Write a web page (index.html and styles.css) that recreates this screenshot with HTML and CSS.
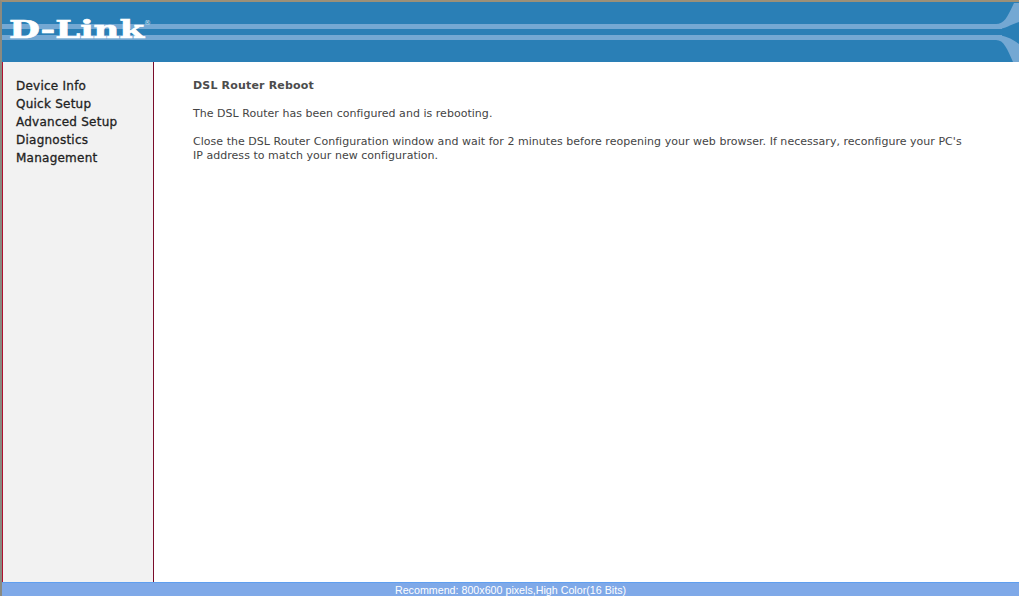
FILE: index.html
```html
<!DOCTYPE html>
<html lang="en">
<head>
<meta charset="utf-8">
<title>DSL Router Reboot</title>
<link rel="stylesheet" href="styles.css">
</head>
<body>
<div class="page">
  <header class="banner">
    <svg class="banner-art" width="1017" height="60" viewBox="0 0 1017 60" aria-hidden="true">
      <rect x="0" y="22" width="1000" height="5" fill="#74a8d3"/>
      <rect x="0" y="33" width="1000" height="5" fill="#74a8d3"/>
      <path d="M994 22 C1002 22 1005 16 1012 1 L1017 1 L1017 20 C1010 22 1003 27 996 27 Z" fill="#74a8d3"/>
      <path d="M994 33 C1003 33 1010 37 1017 42 L1017 60 L1011 60 C1005 47 1002 38 994 38 Z" fill="#74a8d3"/>
    </svg>
    <div class="logo"><span class="logo-text">D-Link</span><span class="logo-mark">®</span></div>
  </header>
  <div class="body-row">
    <nav class="menu">
      <a href="#">Device Info</a>
      <a href="#">Quick Setup</a>
      <a href="#">Advanced Setup</a>
      <a href="#">Diagnostics</a>
      <a href="#">Management</a>
    </nav>
    <main class="content">
      <h1>DSL Router Reboot</h1>
      <p>The DSL Router has been configured and is rebooting.</p>
      <p>Close the DSL Router Configuration window and wait for 2 minutes before reopening your web browser. If necessary, reconfigure your PC's IP address to match your new configuration.</p>
    </main>
  </div>
  <footer class="status">Recommend: 800x600 pixels,High Color(16 Bits)</footer>
</div>
</body>
</html>
```
FILE: styles.css
```css
html, body { margin: 0; height: 100%; overflow: hidden; background: #fff; }
.page {
  box-sizing: border-box;
  height: 596px;
  display: flex;
  flex-direction: column;
  border-top: 2px solid #9c9078;
  border-left: 2px solid #8a8a80;
  font-family: "DejaVu Sans", Verdana, sans-serif;
}
.banner { position: relative; height: 60px; flex: none; background: #2a7fb6; overflow: hidden; }
.banner-art { position: absolute; left: 0; top: 0; display: block; }
.logo { position: absolute; left: 7px; top: 15px; color: #fff; }
.logo-text {
  display: block;
  font: bold 25px/26px "DejaVu Serif", serif;
  transform: scaleX(1.42);
  transform-origin: left top;
  -webkit-text-stroke: 0.7px #fff;
}
.logo-mark {
  position: absolute;
  left: 135px;
  top: 2px;
  font: 7px/8px "DejaVu Sans", sans-serif;
  color: #cfe2f0;
}
.body-row { flex: 1; display: flex; min-height: 0; }
.menu {
  box-sizing: border-box;
  width: 152px;
  flex: none;
  background: #f2f2f2;
  border-left: 1px solid #b01030;
  border-right: 1px solid #7a0c2a;
  padding: 15px 0 0 13px;
  display: flex;
  flex-direction: column;
}
.menu a {
  font-size: 12px;
  line-height: 18px;
  font-weight: 500;
  letter-spacing: 0.24px;
  color: #222;
  text-decoration: none;
  -webkit-text-stroke: 0.3px #222;
}
.content { flex: 1; padding: 15px 50px 0 39px; color: #444; font-size: 11px; letter-spacing: 0.03px; line-height: 14px; }
.content h1 { font-size: 11px; line-height: 18px; font-weight: bold; letter-spacing: 0.18px; color: #4c4c4c; margin: 0 0 12px; }
.content p { margin: 0 0 14px; }
.status {
  flex: none;
  height: 14px;
  box-sizing: border-box;
  background: #7fa9e8;
  border-top: 1px solid #5f9ff0;
  color: #fff;
  text-align: center;
  font: 10.7px/15px "Liberation Sans", Arial, sans-serif;
}
```
